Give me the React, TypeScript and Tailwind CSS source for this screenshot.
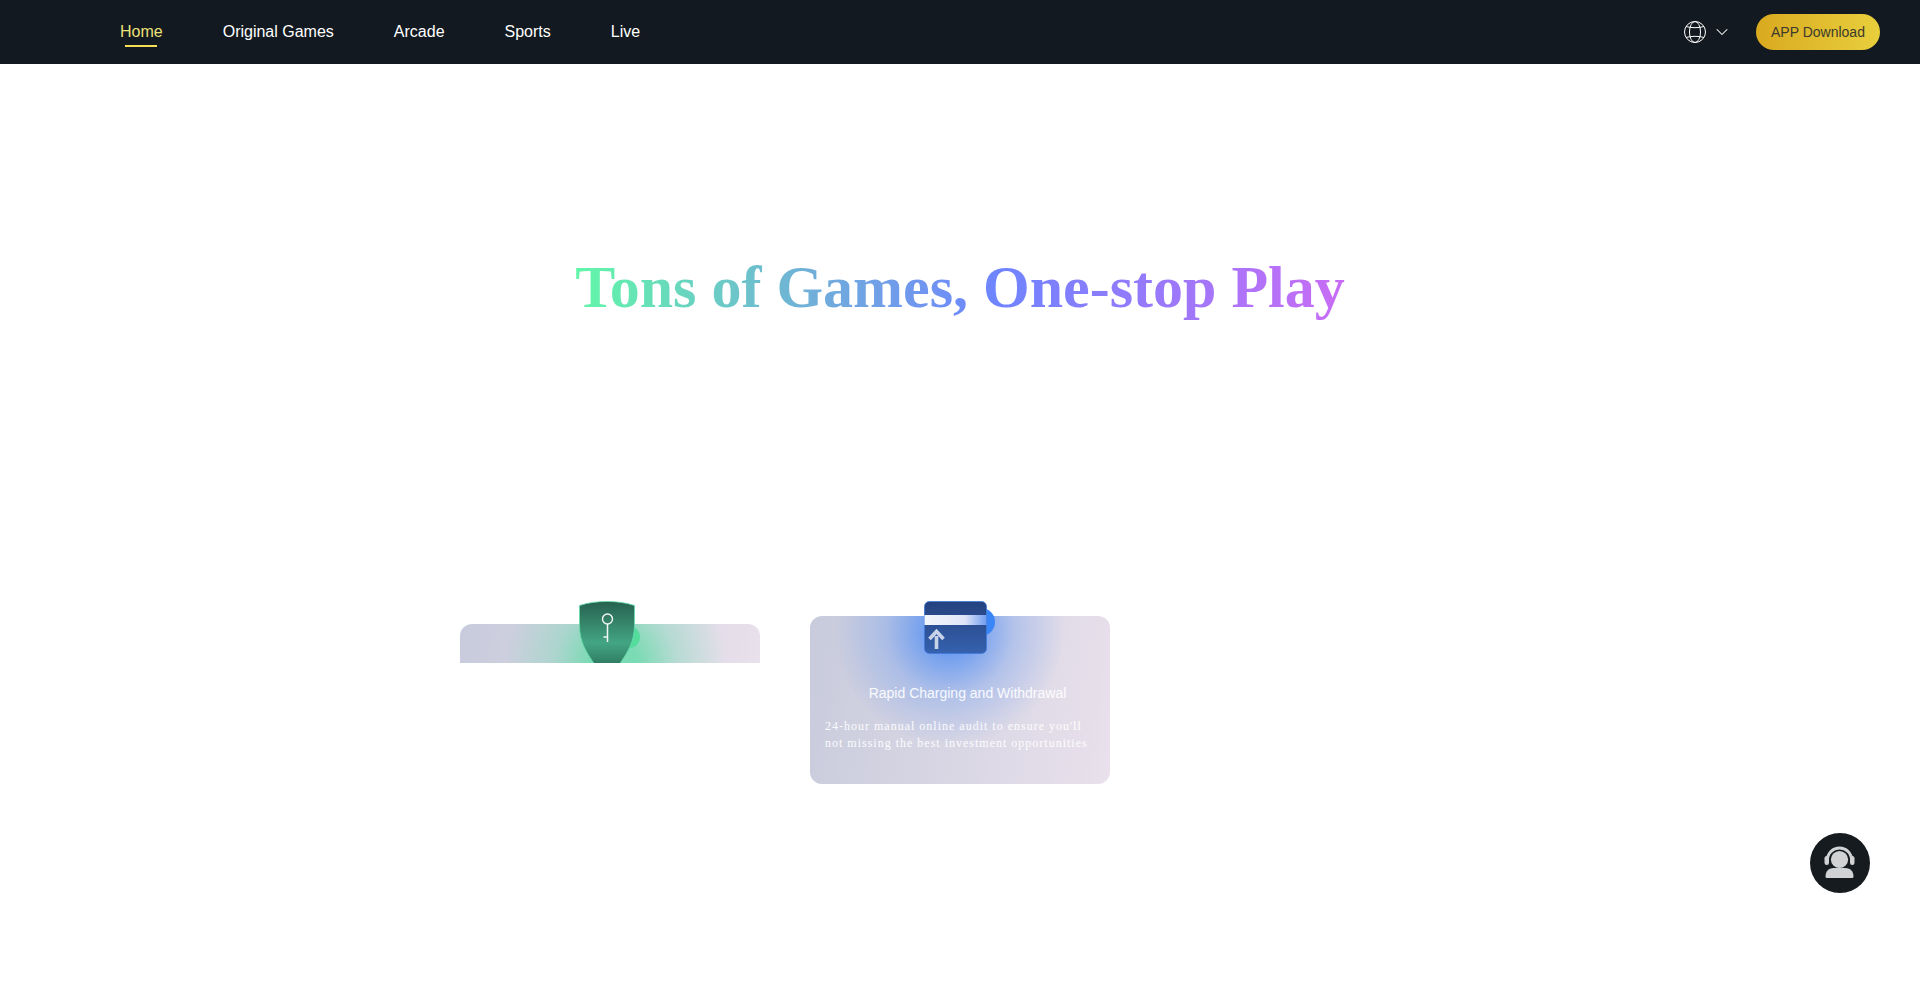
import { ChevronDown } from "lucide-react"

const navItems = ["Original Games", "Arcade", "Sports", "Live"]

function GlobeIcon() {
  return (
    <svg width="24" height="24" viewBox="0 0 24 24" fill="none" stroke="#ffffff" strokeWidth="1">
      <circle cx="12" cy="12" r="10.5" />
      <ellipse cx="12" cy="12" rx="5.5" ry="10.5" />
      <path d="M3 6.5c5 1.6 13 1.6 18 0M3 17.5c5-1.6 13-1.6 18 0" />
    </svg>
  )
}

function ShieldIcon() {
  return (
    <svg width="70" height="64" viewBox="0 0 70 64" fill="none" className="absolute left-[119px] top-[1px]">
      <defs>
        <linearGradient id="shieldFill" x1="0" y1="0" x2="0" y2="1">
          <stop offset="0" stopColor="#26614f" />
          <stop offset="0.65" stopColor="#43a583" />
          <stop offset="1" stopColor="#2f7a62" />
        </linearGradient>
      </defs>
      <circle cx="50" cy="36" r="11" fill="#54dc9d" />
      <path d="M0.5 4.5C10 1.5 18 0.5 28 0.5s18 1 27.5 4V24C55.500 42 48 52 40 64H16C8 52 0.500 42 0.500 24Z" fill="url(#shieldFill)" stroke="#62e0ab" strokeWidth="0.8" />
      <circle cx="28.500" cy="18" r="5" stroke="#f2f7f5" strokeWidth="1.400" />
      <path d="M28.500 23V41M28.500 36h-4" stroke="#f2f7f5" strokeWidth="1.500" />
    </svg>
  )
}

function WalletIcon() {
  return (
    <svg width="74" height="56" viewBox="0 0 74 56" fill="none" className="absolute left-[114px] top-px">
      <defs>
        <linearGradient id="walletFill" x1="0" y1="0" x2="0" y2="1">
          <stop offset="0" stopColor="#25427f" />
          <stop offset="1" stopColor="#3561ae" />
        </linearGradient>
        <linearGradient id="stripeFill" x1="0" y1="0" x2="1" y2="0">
          <stop offset="0" stopColor="#f4f6fc" />
          <stop offset="0.65" stopColor="#dfe6f8" />
          <stop offset="1" stopColor="#6f9bee" />
        </linearGradient>
      </defs>
      <circle cx="57" cy="21" r="14" fill="#3b86f6" />
      <rect x="0.500" y="0.500" width="62" height="52" rx="5" fill="url(#walletFill)" stroke="#3f7ae0" strokeWidth="0.800" />
      <rect x="0.500" y="14" width="62" height="10" fill="url(#stripeFill)" />
      <path d="M12.500 48V35M5.500 38l7-7.500 7 7.500" stroke="#c8d3e8" strokeWidth="3.600" />
    </svg>
  )
}

function AgentIcon() {
  return (
    <svg width="36" height="36" viewBox="0 0 36 36" fill="none">
      <circle cx="17.500" cy="14.500" r="8.600" fill="#d0d2d4" />
      <path d="M5.500 15C5.500 8 11 3 17.500 3S29.500 8 29.500 15" stroke="#d0d2d4" strokeWidth="2.800" />
      <rect x="2.500" y="11" width="4.500" height="9" rx="2.200" fill="#d0d2d4" />
      <rect x="28" y="11" width="4.500" height="9" rx="2.200" fill="#d0d2d4" />
      <path d="M3.500 31.500c0-5 3-8.500 8-8.500h12c5 0 8 3.500 8 8.500 0 1-.8 1.500-1.800 1.500H5.300C4.300 33 3.500 32.500 3.500 31.500Z" fill="#d0d2d4" />
    </svg>
  )
}

export default function App() {
  return (
    <div className="min-h-[993px] bg-white font-['Liberation_Sans',Arial,sans-serif]">
      <header className="h-16 bg-[#121920] flex items-center justify-between pl-[120px] pr-10">
        <nav className="flex items-center gap-[60px] text-base text-white">
          <a className="relative text-[#ece07a]">
            Home
            <span className="absolute left-[5px] top-[25px] w-8 h-0.5 bg-[#f5de55]"></span>
          </a>
          {navItems.map(item => (
            <a key={item}>{item}</a>
          ))}
        </nav>
        <div className="flex items-center">
          <GlobeIcon />
          <ChevronDown className="w-[20px] h-[20px] text-white ml-[5px] mr-[24px]" strokeWidth={1.25} />
          <button className="w-[124px] h-9 rounded-full bg-gradient-to-r from-[#d9a91f] to-[#e8cf3c] text-sm text-[#3b3a2c]">
            APP Download
          </button>
        </div>
      </header>

      <main>
        <div className="h-[536px] pt-[187px] text-center">
          <h1 className="inline-block font-['Liberation_Serif','Times_New_Roman',serif] font-bold text-[60px] leading-[72px] text-transparent bg-clip-text bg-[linear-gradient(90deg,#62f7a8_0%,#70b0d8_30%,#6f84ff_55%,#c96cf5_100%)]">
            Tons of Games, One-stop Play
          </h1>
        </div>

        <div className="flex justify-center items-start gap-[50px]">
          {/* first card is still mid-reveal, only its top strip shows */}
          <div className="relative w-[300px] h-[63px] overflow-hidden pt-6">
            <div className="relative h-[60px] overflow-hidden rounded-t-xl bg-[linear-gradient(100deg,#c8cbdc,#e9e1ec)]">
              <div className="absolute left-[40px] top-[-75px] w-[230px] h-[230px] bg-[radial-gradient(circle,#4fdc9eb0_14%,#4fdc9e48_38%,#4fdc9e00_68%)]"></div>
            </div>
            <ShieldIcon />
          </div>

          <div className="relative w-[300px] pt-[16px]">
            <div className="relative h-[168px] overflow-hidden rounded-xl bg-[linear-gradient(100deg,#c8cbdc,#e9e1ec)] px-[15px] pt-[65px] text-white/90">
              <div className="absolute left-[20px] top-[-105px] w-[240px] h-[240px] bg-[radial-gradient(circle,#3b82f6b0_12%,#3b82f640_38%,#3b82f600_68%)]"></div>
              <h3 className="relative text-center text-sm leading-[24px] pl-[15px]">Rapid Charging and Withdrawal</h3>
              <p className="relative mt-[13px] font-['Liberation_Serif','Times_New_Roman',serif] text-xs leading-[17px] tracking-[1px] whitespace-pre-line">
                {"24-hour manual online audit to ensure you'll\nnot missing the best investment opportunities"}
              </p>
            </div>
            <WalletIcon />
          </div>

          <div className="w-[300px]"></div>
        </div>
      </main>

      <button className="fixed right-[50px] bottom-[100px] w-[60px] h-[60px] rounded-full bg-[#151b1e] flex items-center justify-center">
        <AgentIcon />
      </button>
    </div>
  )
}
